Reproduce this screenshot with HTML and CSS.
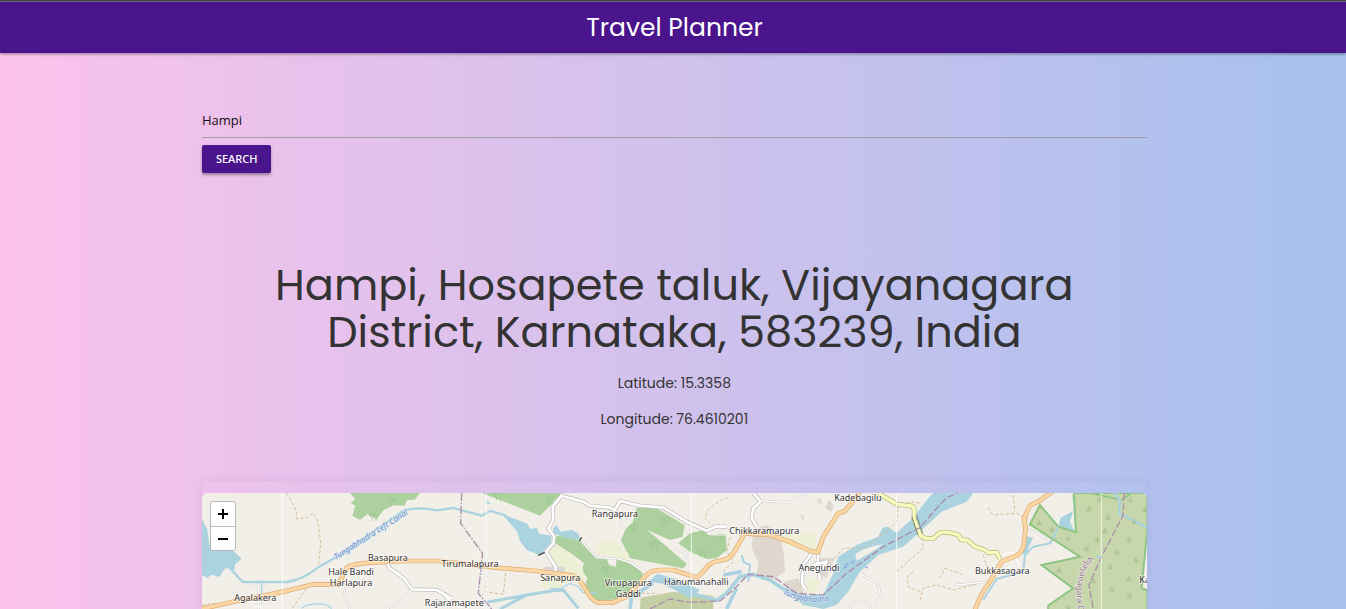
FILE: index.html
```html
<!DOCTYPE html>
<html lang="en">
<head>
<meta charset="utf-8">
<title>Travel Planner</title>
<link rel="stylesheet" href="styles.css">
</head>
<body>
<header class="navbar"><a class="brand" href="#">Travel Planner</a></header>
<main class="container">
  <form class="search">
    <input class="search-input" type="text" aria-label="Destination" value="Hampi">
    <button class="search-button" type="button">SEARCH</button>
  </form>
  <section class="place">
    <h1 class="place-name">Hampi, Hosapete taluk, Vijayanagara District, Karnataka, 583239, India</h1>
    <p class="coordinate">Latitude: 15.3358</p>
    <p class="coordinate">Longitude: 76.4610201</p>
  </section>
  <section class="map-card">
    <div class="map">
      <svg class="map-canvas" viewBox="36 54 2835 600" preserveAspectRatio="xMidYMin slice" role="img" aria-label="Map of Hampi">
        <defs>
          <path id="canal-label" d="M438 255 L655 117"/>
          <path id="river-label" d="M1778 356 Q1850 395 1930 374"/>
          <path id="district-label" d="M2698 242 Q2640 320 2672 430 L2690 560"/>
          <pattern id="scrub" width="11" height="11" patternUnits="userSpaceOnUse"><path d="M0 0H11V11H0Z" fill="#e2dbd2"/><path d="M1 2h4v3H1zM7 7h3v3H7z" fill="#d0c6be"/></pattern>
          <path id="tuft" d="M-8 -3 L-2 5 L0 -8 L2 5 L8 -3 M-8 6H8" fill="none" stroke="#9fbb8a" stroke-width="2"/>
          <path id="tree" d="M-5 12V0M-8 0a6 6 0 1 1 6-2M6 12V0M3 0a6 6 0 1 1 6-2" fill="none" stroke="#93bf88" stroke-width="2"/>
        </defs>
        <rect x="36" y="54" width="2835" height="1200" fill="#f2efe9"/>
        <g fill="#add19e">
          <path d="M480 54L496 72 482 84 496 92 487 122 510 135 532 118 560 133 580 106 612 90 645 92 650 76 674 74 690 54Z"/>
          <path d="M875 54L1050 122 1085 87 1115 54Z"/>
          <path d="M1095 185L1120 180 1175 200 1215 245 1250 252 1258 270 1278 275 1280 248 1310 250 1360 296 1340 340 1295 372 1215 378 1185 330 1192 310 1175 285 1182 265 1150 240 1095 205Z"/>
          <path d="M1340 98L1400 100 1484 150 1478 185 1440 195 1372 165 1492 268 1478 280 1320 250 1293 195 1308 160 1328 145Z"/>
          <path d="M1465 205L1500 175 1540 165 1555 180 1608 184 1611 225 1580 250 1550 252 1500 230Z"/>
        </g>
        <g fill="#eef0d5">
          <path d="M1215 210L1245 195 1290 205 1300 225 1316 235 1316 262 1260 240 1220 240Z"/>
          <path d="M1090 205L1150 240 1178 280 1185 330 1150 305 1100 345 1050 335 1065 295 1085 270 1070 230Z"/>
          <path d="M1770 180L1870 170 1885 225 1790 215Z"/><path d="M1850 305L1890 315 1880 350 1850 370Z"/>
        </g>
        <g fill="url(#scrub)">
          <path d="M1690 165L1730 150 1772 182 1782 240 1785 290 1745 315 1700 300 1705 260 1685 220Z"/>
          <path d="M1780 320L1825 310 1840 355 1795 350ZM1890 250L1935 248 1910 310 1890 300ZM1880 75L1895 70 1892 92ZM1905 100L1918 72 1930 92 1925 110ZM1830 118L1842 125 1840 140Z"/>
        </g>
        <path d="M1060 275h65v28h-65z" fill="#ddd8d5"/>
        <path d="M1350 402L1352 368 1450 350 1570 362 1570 602H1350Z" fill="#c5cfa5"/>
        <g fill="#aad3df">
          <path d="M36 130L52 165 60 218 130 228 155 251 135 268 134 284 106 279 88 306 66 299 52 308 36 300Z"/>
          <path d="M935 116L1012 146 1020 162 1040 158 1048 176 1085 182 1082 205 1050 240 1010 225 990 198 982 170Z"/>
          <path d="M1090 158L1100 150 1112 170 1145 164 1165 175 1170 195 1125 188 1090 175Z"/>
          <path d="M1375 320L1402 296 1460 312 1530 345 1500 370 1420 326Z"/>
          <path d="M1780 335L1840 360 1900 358 1928 300 1945 245 2000 210 2065 185 2078 158 2094 155 2120 174 2170 128 2215 70 2230 54H2350L2330 80 2255 110 2190 170 2140 215 2065 240 2010 290 1975 350 1940 390 1900 402 1840 390Z"/>
          <path d="M2605 155L2612 128 2650 108 2640 140 2655 172ZM2505 182L2530 188 2520 210 2510 235 2498 240ZM884 84L894 77 902 87Z"/>
        </g>
        <path d="M1996 238Q2020 217 2080 207Q2050 230 2000 257Z" fill="#f2efe9"/>
        <g class="stream">
          <path d="M120 280L158 321H290Q335 315 380 280L440 245 640 108Q652 100 700 100L740 106 790 99 875 122 900 108 950 122" stroke-width="7"/>
          <path d="M215 321V385M335 400Q345 388 385 386Q420 388 424 402M1080 340L1110 342 1140 325 1165 335 1178 352 1220 354" stroke-width="4"/>
          <path d="M930 402L1010 360 1090 347 1120 345 1165 400M890 382L1010 360" stroke-width="9"/>
          <path d="M1320 402L1325 365 1390 325M1500 355L1580 376 1610 355 1650 305 1690 298 1740 315 1800 355M1600 300L1655 290M1610 402L1640 340" stroke-width="11"/>
          <path d="M1655 240L1662 262 1680 270 1675 320" stroke-width="6"/>
          <path d="M2590 190L2580 205 2530 215 2505 240 2500 290 2420 312 2380 375M2600 160L2590 190M2650 60L2655 110" stroke-width="6"/>
        </g>
        <path d="M2652 54L2658 172 2605 155 2550 90 2520 148 2670 245 2555 270 2650 340 2575 392 2568 602H2872V345L2855 340 2872 165V54Z" fill="#c8d7ab" stroke="#8dc583" stroke-width="6"/>
        <path d="M2700 54L2795 75 2825 54" fill="none" stroke="#8dc583" stroke-width="5"/>
        <path class="stream" d="M2772 54L2790 75 2788 115 2872 158M2718 244L2735 248M2605 155L2590 190" stroke-width="7"/>
        <g>
          <use href="#tuft" x="2548" y="143"/><use href="#tuft" x="2586" y="164"/><use href="#tuft" x="2635" y="190"/><use href="#tuft" x="2697" y="102"/><use href="#tuft" x="2730" y="72"/><use href="#tuft" x="2754" y="127"/><use href="#tuft" x="2745" y="167"/><use href="#tuft" x="2722" y="194"/><use href="#tuft" x="2690" y="220"/><use href="#tuft" x="2821" y="75"/><use href="#tuft" x="2833" y="140"/><use href="#tuft" x="2818" y="193"/><use href="#tuft" x="2781" y="232"/><use href="#tuft" x="2838" y="255"/><use href="#tuft" x="2762" y="275"/><use href="#tuft" x="2816" y="310"/><use href="#tuft" x="2766" y="342"/><use href="#tuft" x="2819" y="362"/><use href="#tuft" x="2608" y="285"/><use href="#tuft" x="2635" y="397"/><use href="#tuft" x="2710" y="317"/><use href="#tuft" x="2865" y="105"/>
          <use href="#tree" x="610" y="82"/><use href="#tree" x="552" y="126"/><use href="#tree" x="925" y="64"/><use href="#tree" x="1080" y="78"/><use href="#tree" x="1425" y="140"/><use href="#tree" x="1333" y="158"/><use href="#tree" x="1394" y="212"/><use href="#tree" x="1247" y="288"/><use href="#tree" x="1538" y="236"/><use href="#tree" x="1596" y="190"/>
        </g>
        <g class="track">
          <path d="M290 54L300 72 318 105 320 132 350 128 370 114 384 140 392 205 386 270M350 340L305 402M36 390L75 385M890 300L885 350 940 358 948 290M1290 355L1405 355"/>
          <path d="M1615 68Q1550 90 1545 130L1570 152M1620 188L1610 230 1630 260 1600 290M1935 250L1960 220 2030 218 2120 142 2125 90M2120 290L2200 220 2195 170M2170 292Q2145 300 2155 335L2190 350M2120 100L2160 80 2195 85"/>
          <path d="M2395 98L2410 120 2480 115 2515 132M2470 60L2475 110M2190 375L2200 340 2240 330 2290 345 2370 325M2250 310L2265 280 2320 300M2380 240L2390 275"/>
        </g>
        <g class="minor-case"><path d="M590 262L600 280 642 310 665 343 740 345 785 370M755 350L790 390M1115 62L1088 95 1090 135 1075 160 1093 185 1090 205 1068 230 1097 275 1095 300M1115 62L1180 80 1200 92 1260 98 1275 105 1290 78 1350 92 1420 98 1490 140 1550 167 1580 154 1610 155M1690 54L1712 80 1690 100 1685 130 1700 154"/><path d="M1865 235L1840 270 1836 325 1848 345M1885 235L1883 270 1890 315M1870 270L1910 260 1895 285 1925 275"/></g>
        <g class="minor"><path d="M590 262L600 280 642 310 665 343 740 345 785 370M755 350L790 390M1115 62L1088 95 1090 135 1075 160 1093 185 1090 205 1068 230 1097 275 1095 300M1115 62L1180 80 1200 92 1260 98 1275 105 1290 78 1350 92 1420 98 1490 140 1550 167 1580 154 1610 155M1690 54L1712 80 1690 100 1685 130 1700 154"/><path d="M1865 235L1840 270 1836 325 1848 345M1885 235L1883 270 1890 315M1870 270L1910 260 1895 285 1925 275"/></g>
        <g class="lane-case"><path d="M460 335L470 380 480 402M665 345L635 375 590 402M1175 200L1220 248 1280 250 1320 262 1370 296M1290 105L1292 145 1302 160M1455 220L1490 235 1492 268M1715 78L1800 82 1850 54M2010 290L2025 305 2065 325 2072 365 2055 390M1980 402L1990 382 2030 380 2042 402M2300 330L2400 320M2510 160L2580 195M130 345L150 385M180 325L205 340V402"/></g>
        <g class="lane"><path d="M460 335L470 380 480 402M665 345L635 375 590 402M1175 200L1220 248 1280 250 1320 262 1370 296M1290 105L1292 145 1302 160M1455 220L1490 235 1492 268M1715 78L1800 82 1850 54M2010 290L2025 305 2065 325 2072 365 2055 390M1980 402L1990 382 2030 380 2042 402M2300 330L2400 320M2510 160L2580 195M130 345L150 385M180 325L205 340V402M185 380H220M190 395H215M2430 240L2470 232 2490 275"/></g>
        <g class="main-case"><path d="M30 403L130 380 280 350 370 328H445Q460 300 470 279Q480 268 540 263L640 258H750L920 278 1040 288 1150 302Q1165 308 1185 340Q1208 382 1225 382H1270L1310 365 1370 300Q1384 286 1410 285H1450L1520 308 1540 290Q1555 268 1570 262L1612 252 1630 235 1656 190 1662 175 1740 180 1800 200 1860 228 1884 232 1900 185 1945 115 1965 108 1995 72 2010 50"/><path d="M2355 405Q2370 360 2400 320L2435 260 2480 242Q2500 228 2502 205L2507 160 2502 130 2520 92 2550 76 2588 50"/></g>
        <g class="main"><path d="M30 403L130 380 280 350 370 328H445Q460 300 470 279Q480 268 540 263L640 258H750L920 278 1040 288 1150 302Q1165 308 1185 340Q1208 382 1225 382H1270L1310 365 1370 300Q1384 286 1410 285H1450L1520 308 1540 290Q1555 268 1570 262L1612 252 1630 235 1656 190 1662 175 1740 180 1800 200 1860 228 1884 232 1900 185 1945 115 1965 108 1995 72 2010 50"/><path d="M2355 405Q2370 360 2400 320L2435 260 2480 242Q2500 228 2502 205L2507 160 2502 130 2520 92 2550 76 2588 50"/></g>
        <path class="yellow-case" d="M2060 52L2122 88 2165 93Q2176 94 2172 130L2190 178Q2200 194 2230 190L2250 173Q2270 168 2305 180L2315 195 2332 195 2355 215 2385 225 2395 233 2420 232 2430 252"/>
        <path class="yellow" d="M2060 52L2122 88 2165 93Q2176 94 2172 130L2190 178Q2200 194 2230 190L2250 173Q2270 168 2305 180L2315 195 2332 195 2355 215 2385 225 2395 233 2420 232 2430 252"/>
        <path d="M2166 125L2184 180M2180 122L2198 174" stroke="#555" stroke-width="2"/>
        <path d="M1045 241L1064 232M1168 198L1175 187" stroke="#444" stroke-width="4"/>
        <g class="border"><path d="M815 54L812 145 878 235 865 355 905 402" stroke-dasharray="24 5 5 5"/><path d="M1500 382L1590 378 1630 345 1675 298 1750 305 1820 355 1900 360 1970 295 2080 215 2190 158 2240 100 2270 68 2305 54M1380 402L1440 372 1500 382M2802 54L2800 120 2735 245 2697 330 2710 402"/></g>
        <path d="M1960 280l12-5M1984 264l10-6M1965 272l10-6M2026 276l8 3" stroke="#798ff1" stroke-width="3"/>
        <path d="M277 54V1200M889 54V1200M1504 54V1200M2120 54V1200M2734 54V1200" stroke="#fff" stroke-width="3" opacity=".8"/>
        <g class="place-label">
          <text x="594" y="259">Basapura</text><text x="483" y="300">Hale Bandi</text><text x="483" y="334">Harlapura</text><text x="196" y="378">Agalakera</text><text x="840" y="277">Tirumalapura</text><text x="793" y="393">Rajaramapete</text><text x="1275" y="126">Rangapura</text><text x="1111" y="318">Sanapura</text><text x="1315" y="333">Virupapura</text><text x="1315" y="367">Gaddi</text><text x="1519" y="331">Hanumanahalli</text><text x="1723" y="176">Chikkaramapura</text><text x="2004" y="77">Kadebagilu</text><text x="1887" y="287">Anegundi</text><text x="2437" y="298">Bukkasagara</text><text x="2864" y="324">Ka</text>
        </g>
        <text class="water-label"><textPath href="#canal-label">Tungabhadra Left Canal</textPath></text>
        <text class="water-label"><textPath href="#river-label">Tungabhadra</textPath></text>
        <text class="district-label"><textPath href="#district-label">Vijayanagara District</textPath></text>
      </svg>
      <div class="zoom-control">
        <button class="zoom-button" type="button" aria-label="Zoom in"><svg class="zoom-icon" viewBox="0 0 12 12"><path d="M1 6H11M6 1V11"/></svg></button>
        <button class="zoom-button" type="button" aria-label="Zoom out"><svg class="zoom-icon" viewBox="0 0 12 12"><path d="M1 6H11"/></svg></button>
      </div>
    </div>
  </section>
</main>
</body>
</html>
```
FILE: styles.css
```css
* { box-sizing: border-box; }
body {
  margin: 0;
  height: 100vh;
  display: flex;
  flex-direction: column;
  overflow: hidden;
  background: linear-gradient(to right, #fbc2eb, #a6c1ee);
  color: #333;
  font-family: Poppins, Inter, sans-serif;
}
.navbar {
  display: flex;
  justify-content: center;
  align-items: center;
  flex: none;
  height: 53px;
  padding: 2px 0 0 3px;
  border-top: 1px solid #3c4043;
  background: #4a148c;
  box-shadow: inset 0 1px #6f6a80, 0 1px 3px rgba(0, 0, 0, .4);
}
.brand { color: #fff; font-size: 25px; line-height: 50px; text-decoration: none; }
.container {
  flex: 1;
  display: flex;
  flex-direction: column;
  margin: 0 14.8% 0 15%;
  padding-top: 50px;
}
.search { display: flex; flex-direction: column; align-items: flex-start; gap: 7px; }
.search-input {
  width: 100%;
  height: 35px;
  padding: 0;
  border: 0;
  border-bottom: 1px solid #9e9e9e;
  outline: 0;
  background: transparent;
  color: #111;
  font: 13px "Open Sans", sans-serif;
}
.search-button {
  height: 28px;
  padding: 0 14px 1px;
  border: 0;
  border-radius: 2px;
  background: #4a148c;
  box-shadow: 0 2px 3px rgba(0, 0, 0, .35);
  color: #fff;
  font: 500 11px "Noto Sans", sans-serif;
}
.place { padding: 89px 32px 0; text-align: center; }
.place-name { margin: 0 0 16px; font-size: 43px; font-weight: 400; line-height: 47px; }
.coordinate { margin: 0 0 14px; font-size: 14px; line-height: 22px; }
.map-card {
  flex: 1;
  display: flex;
  margin-top: 37px;
  padding-top: 12px;
  border-radius: 8px 8px 0 0;
  box-shadow: 0 0 10px rgba(60, 30, 100, .08);
}
.map { position: relative; flex: 1; overflow: hidden; border-radius: 6px 6px 0 0; background: #f2efe9; }
.map-canvas { position: absolute; display: block; width: 100%; height: auto; min-height: 100%; }
.zoom-control {
  position: absolute;
  top: 8px;
  left: 8px;
  display: flex;
  flex-direction: column;
  border: 1px solid #b5b5b5;
  border-radius: 3px;
  overflow: hidden;
}
.zoom-button { display: grid; place-items: center; width: 24px; height: 24px; padding: 0; border: 0; background: #fff; }
.zoom-button + .zoom-button { border-top: 1px solid #bbb; }
.zoom-icon { width: 12px; height: 12px; stroke: #000; stroke-width: 2; }
.stream, .track, .minor, .minor-case, .lane, .lane-case, .main, .main-case, .yellow, .yellow-case, .border { fill: none; stroke-linejoin: round; }
.stream { stroke: #aad3df; }
.track { stroke: #d8bd96; stroke-width: 3; stroke-dasharray: 10 6; }
.minor-case { stroke: #bcb8b8; stroke-width: 12; }
.minor { stroke: #fff; stroke-width: 8; }
.lane-case { stroke: #cdc8c8; stroke-width: 7; }
.lane { stroke: #fff; stroke-width: 4; }
.main-case { stroke: #d9aa6c; stroke-width: 14; }
.main { stroke: #fcd6a4; stroke-width: 10; }
.yellow-case { stroke: #bcc283; stroke-width: 15; }
.yellow { stroke: #f7fabf; stroke-width: 10; }
.border { stroke: #ac8dab; stroke-width: 4; stroke-dasharray: 22 7; }
.place-label { font: 27px "Noto Sans", sans-serif; fill: #333; text-anchor: middle; stroke: rgba(255, 255, 255, .65); stroke-width: 5; paint-order: stroke; }
.water-label { font: italic 24px "Noto Sans", sans-serif; fill: #5b87c9; stroke: #e4eff3; stroke-width: 3; paint-order: stroke; }
.district-label { font: 25px "Noto Sans", sans-serif; fill: #957595; stroke: #e5e9d8; stroke-width: 4; paint-order: stroke; }
```
